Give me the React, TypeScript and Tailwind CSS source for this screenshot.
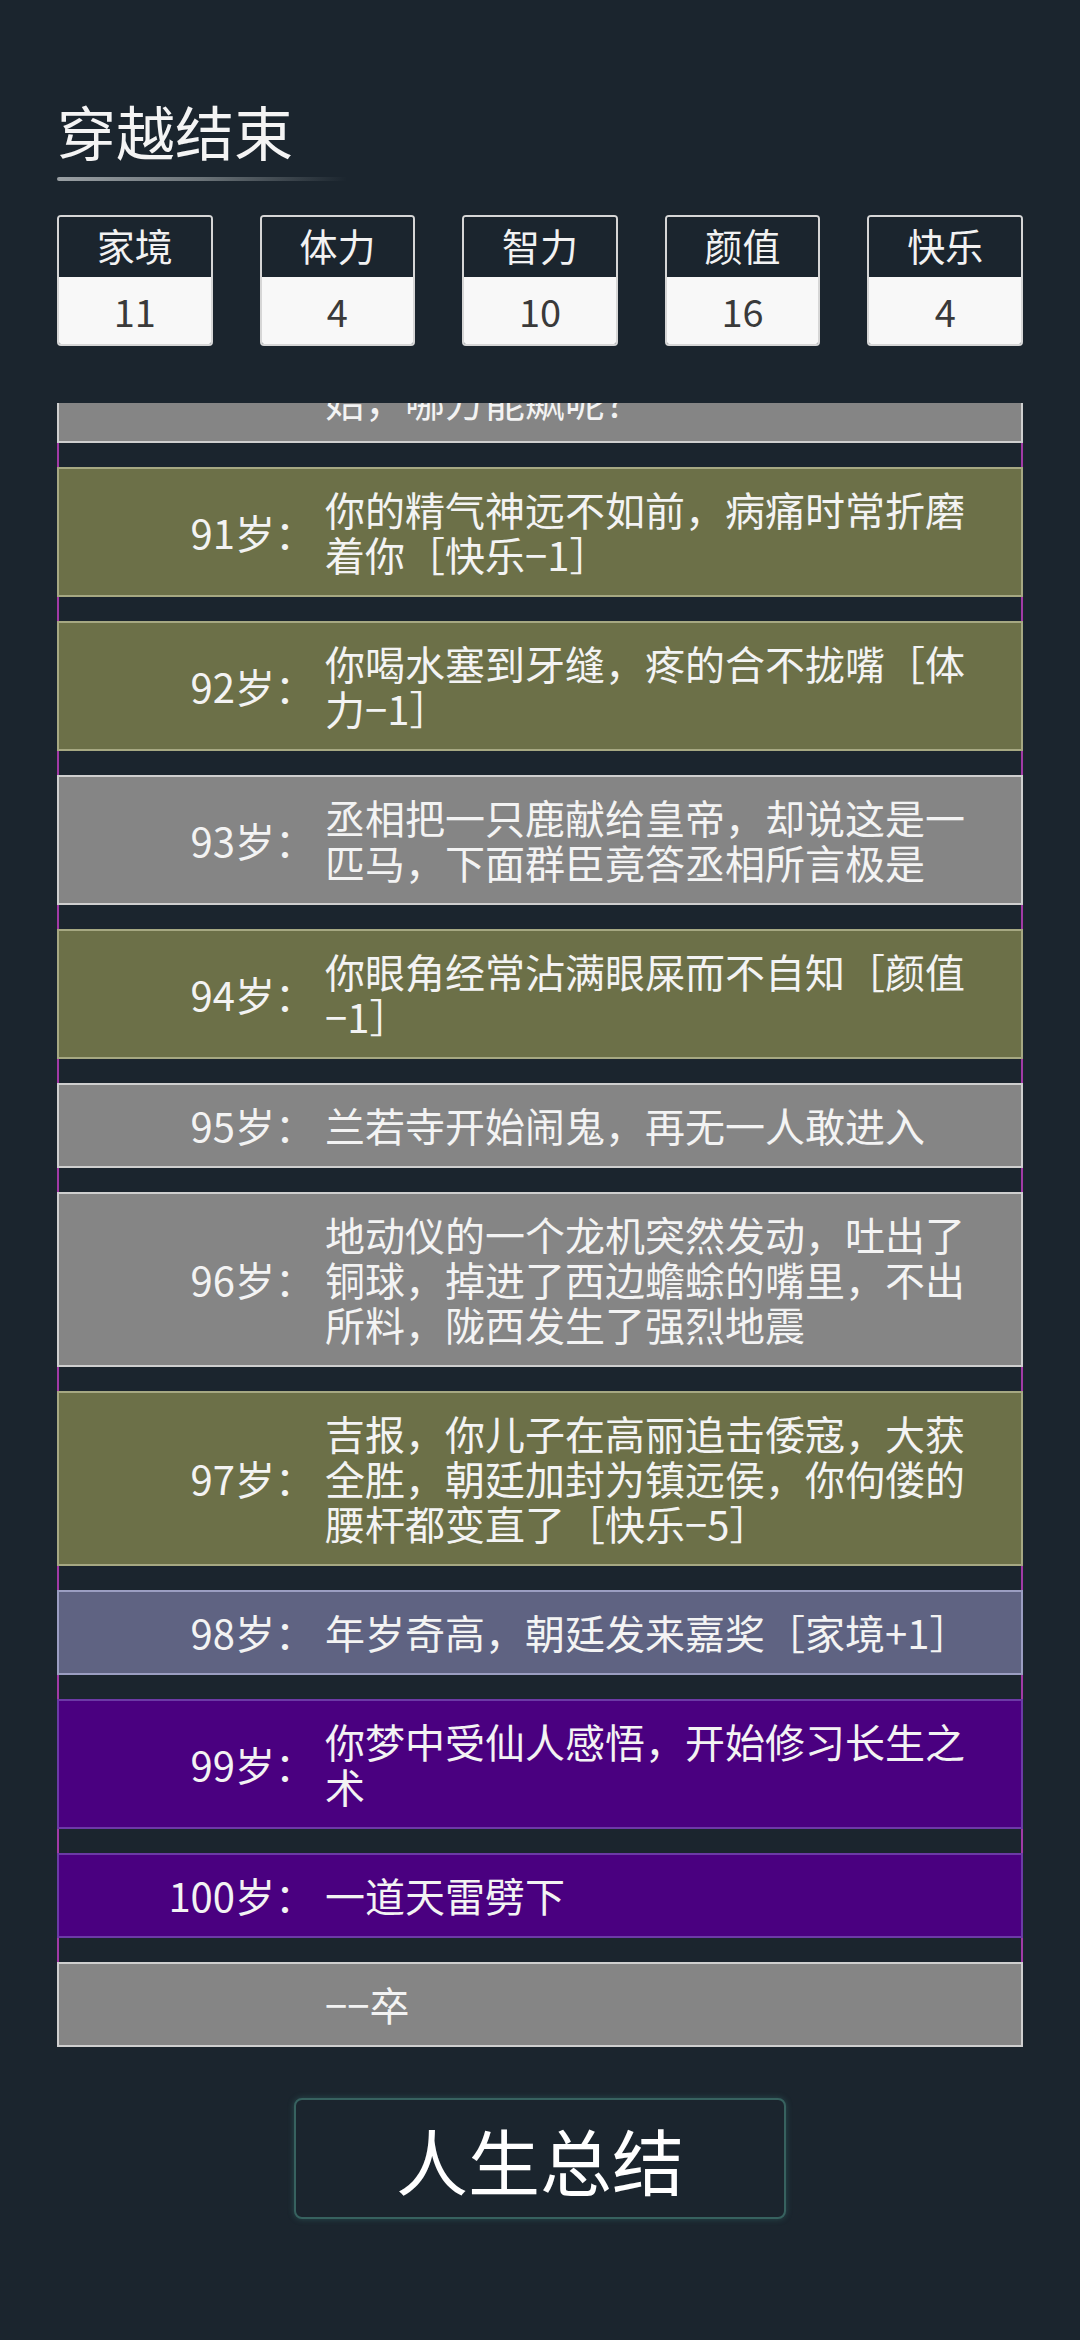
import React from "react";

type Item = { age: string; text: React.ReactNode; bg: string; bd: string };

const NW = ({ children }: { children: React.ReactNode }) => <span className="whitespace-nowrap">{children}</span>;

const items: Item[] = [
  { age: "91岁：", text: <>你的精气神远不如前，病痛时常折磨着你［快乐<NW>−1］</NW></>, bg: "bg-[#6c7048]", bd: "border-[#a6a882]" },
  { age: "92岁：", text: <>你喝水塞到牙缝，疼的合不拢嘴［体力<NW>−1］</NW></>, bg: "bg-[#6c7048]", bd: "border-[#a6a882]" },
  { age: "93岁：", text: "丞相把一只鹿献给皇帝，却说这是一匹马，下面群臣竟答丞相所言极是", bg: "bg-[#858585]", bd: "border-[#cfcfcf]" },
  { age: "94岁：", text: <>你眼角经常沾满眼屎而不自知［颜值<NW>−1］</NW></>, bg: "bg-[#6c7048]", bd: "border-[#a6a882]" },
  { age: "95岁：", text: "兰若寺开始闹鬼，再无一人敢进入", bg: "bg-[#858585]", bd: "border-[#cfcfcf]" },
  { age: "96岁：", text: "地动仪的一个龙机突然发动，吐出了铜球，掉进了西边蟾蜍的嘴里，不出所料，陇西发生了强烈地震", bg: "bg-[#858585]", bd: "border-[#cfcfcf]" },
  { age: "97岁：", text: <>吉报，你儿子在高丽追击倭寇，大获全胜，朝廷加封为镇远侯，你佝偻的腰杆都变直了［快乐<NW>−5］</NW></>, bg: "bg-[#6c7048]", bd: "border-[#a6a882]" },
  { age: "98岁：", text: <>年岁奇高，朝廷发来嘉奖［家境<NW>+1］</NW></>, bg: "bg-[#5f6382]", bd: "border-[#9b9ec2]" },
  { age: "99岁：", text: "你梦中受仙人感悟，开始修习长生之术", bg: "bg-[#4a0080]", bd: "border-[#6c3aa6]" },
  { age: "100岁：", text: "一道天雷劈下", bg: "bg-[#4a0080]", bd: "border-[#6c3aa6]" },
  { age: "", text: <NW>−−卒</NW>, bg: "bg-[#858585]", bd: "border-[#cfcfcf]" },
];

const stats = [
  { k: "家境", v: "11" },
  { k: "体力", v: "4" },
  { k: "智力", v: "10" },
  { k: "颜值", v: "16" },
  { k: "快乐", v: "4" },
];

const font = { fontFamily: '"Noto Sans CJK SC", "Noto Sans", sans-serif' };

function Row({ it, extra = "" }: { it: Item; extra?: string }) {
  return (
    <div className={`-mx-[2px] flex items-center border-2 ${it.bg} ${it.bd} py-[18px] text-[40px] leading-[45px] text-[#f3f3f3] ${extra}`}>
      <div className="w-[256px] shrink-0 whitespace-nowrap text-right">{it.age}</div>
      <div className="ml-[10px] flex-1 pr-[30px] [line-break:anywhere]">{it.text}</div>
    </div>
  );
}

export default function App() {
  return (
    <div className="min-h-[2340px] w-[1080px] bg-[#1b252e] px-[57px]" style={font}>
      <div className="pt-[95px] text-[59px] leading-[72px] text-[#f4f4f4]">穿越结束</div>
      <div className="mt-[10px] h-[4px] w-[290px] rounded-full bg-gradient-to-r from-[#9aa0a4] via-[#6b7378] to-transparent" />

      <div className="mt-[34px] grid grid-cols-5 gap-x-[47px]">
        {stats.map((s) => (
          <div key={s.k} className="flex h-[131px] flex-col overflow-hidden rounded-[4px] border-2 border-[#d6d6d6]">
            <div className="flex h-[60px] items-center justify-center bg-[#1b252e] pb-[4px] text-[38px] leading-none text-[#f2f2f2]">{s.k}</div>
            <div className="flex flex-1 items-center justify-center bg-[#f8f8f8] text-[38px] leading-none text-[#3a3a3a]">{s.v}</div>
          </div>
        ))}
      </div>

      <div className="mt-[57px] overflow-hidden">
        <div className="flex flex-col gap-[24px] border-x-2 border-[#a23aa6]">
          <Row
            it={{ age: "90岁：", text: "天下大乱，群雄四起，新一轮争霸开始，哪方能飙呢？", bg: "bg-[#858585]", bd: "border-[#cfcfcf]" }}
            extra="-mt-[90px]"
          />
          {items.map((it, i) => (
            <Row key={i} it={it} />
          ))}
        </div>
      </div>

      <div className="mt-[51px] flex justify-center">
        <div className="flex h-[121px] w-[492px] items-center justify-center rounded-[8px] border-2 border-[#37625f] bg-[#1b252e] text-[72px] leading-none text-white shadow-[0_0_6px_rgba(70,150,140,0.35)]">
          人生总结
        </div>
      </div>
    </div>
  );
}
